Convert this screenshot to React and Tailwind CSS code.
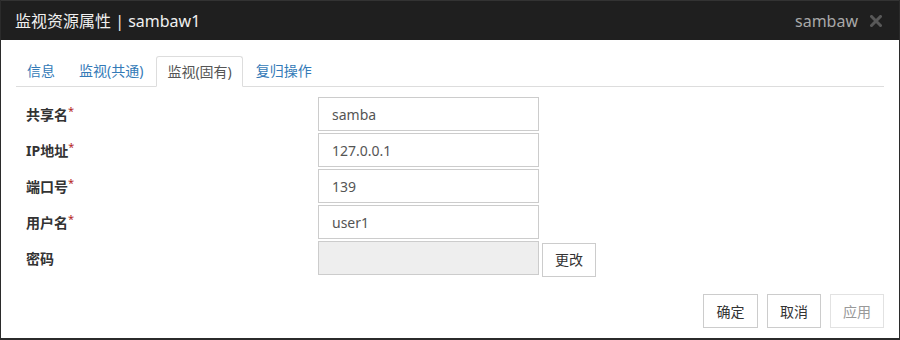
import React from "react";

const font = { fontFamily: '"Noto Sans", "Noto Sans CJK SC", sans-serif' };

const tabs = [
  { label: "信息", active: false },
  { label: "监视(共通)", active: false },
  { label: "监视(固有)", active: true },
  { label: "复归操作", active: false },
];

const fields = [
  { label: "共享名", value: "samba", required: true },
  { label: "IP地址", value: "127.0.0.1", required: true },
  { label: "端口号", value: "139", required: true },
  { label: "用户名", value: "user1", required: true },
];

export default function App() {
  return (
    <div
      className="w-[900px] h-[340px] flex flex-col bg-white border-l border-r border-b-2 border-[#2b2b2b] overflow-hidden"
      style={font}
    >
      {/* title bar */}
      <div className="h-[40px] shrink-0 bg-[#1f1f1f] border-t border-[#333] flex items-center pl-[14px] pr-[17px]">
        <span className="text-[16px] text-[#f0f0f0]">监视资源属性 | sambaw1</span>
        <span className="ml-auto text-[16px] text-[#a8a8a8]">sambaw</span>
        <svg className="ml-[12px]" width="12" height="12" viewBox="0 0 12 12">
          <path d="M1.5 1.5 L10.5 10.5 M10.5 1.5 L1.5 10.5" stroke="#585858" strokeWidth="3" strokeLinecap="square" />
        </svg>
      </div>

      {/* tabs */}
      <div className="mx-[15px] mt-[16px] h-[31px] flex items-end border-b border-[#ddd]">
        {tabs.map((t) =>
          t.active ? (
            <div
              key={t.label}
              className="h-[31px] -mb-px px-[10px] mr-[2px] flex items-center text-[14px] text-[#555] bg-white border border-[#ddd] border-b-white rounded-t-[3px]"
            >
              {t.label}
            </div>
          ) : (
            <div
              key={t.label}
              className="h-[31px] px-[11px] mr-[2px] flex items-center text-[14px] text-[#337ab7]"
            >
              {t.label}
            </div>
          )
        )}
      </div>

      {/* form */}
      <div className="mt-[10px] pl-[25px] flex flex-col gap-[2px]">
        {fields.map((f) => (
          <div key={f.label} className="flex items-center h-[34px]">
            <div className="w-[292px] flex items-start text-[14px] font-bold text-[#333]">
              {f.label}
              {f.required && (
                <span className="text-[11px] leading-none mt-[1px] text-[#b5261e] font-normal">*</span>
              )}
            </div>
            <div className="w-[221px] h-[34px] border border-[#ccc] flex items-center px-[13px] text-[14px] text-[#555]">
              {f.value}
            </div>
          </div>
        ))}
        <div className="flex items-center h-[34px]">
          <div className="w-[292px] text-[14px] font-bold text-[#333]">密码</div>
          <div className="w-[221px] h-[34px] border border-[#ccc] bg-[#eee]" />
          <button className="ml-[3px] mt-[3px] w-[54px] h-[34px] border border-[#ccc] bg-white text-[14px] text-[#333]">
            更改
          </button>
        </div>
      </div>

      {/* footer buttons */}
      <div className="mt-auto mb-[10px] pr-[15px] flex justify-end gap-[9px]">
        <button className="w-[55px] h-[34px] border border-[#ccc] bg-white text-[14px] text-[#333]">确定</button>
        <button className="w-[54px] h-[34px] border border-[#ccc] bg-white text-[14px] text-[#333]">取消</button>
        <button className="w-[54px] h-[34px] border border-[#e2e2e2] bg-white text-[14px] text-[#999]">应用</button>
      </div>
    </div>
  );
}
